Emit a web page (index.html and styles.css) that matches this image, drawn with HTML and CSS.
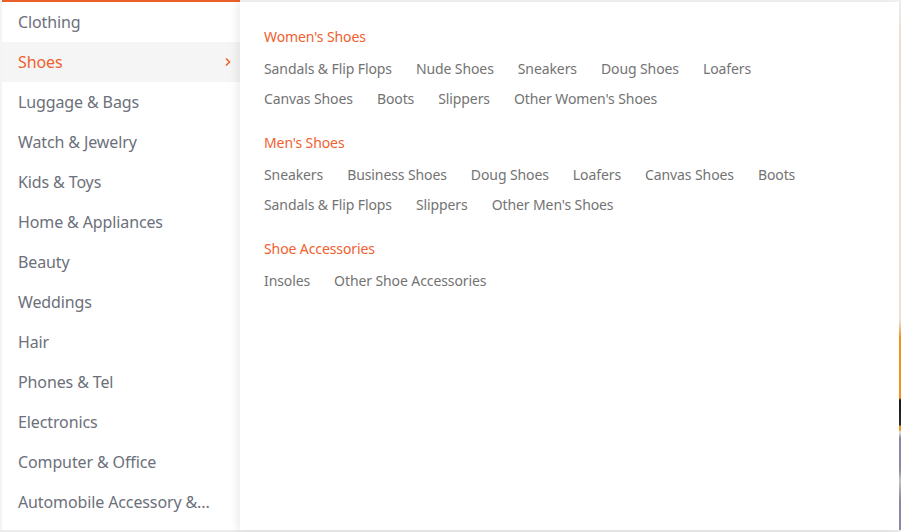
FILE: index.html
```html
<!DOCTYPE html>
<html>
<head>
<meta charset="utf-8">
<link rel="stylesheet" href="styles.css">
</head>
<body>
<div class="page">
  <ul class="cats">
    <li class="cat">Clothing</li>
    <li class="cat active">Shoes<svg class="chev" width="8" height="10" viewBox="0 0 8 10"><path d="M2 1.5 L5.5 5 L2 8.5" fill="none" stroke="#f0602e" stroke-width="1.6"/></svg></li>
    <li class="cat">Luggage &amp; Bags</li>
    <li class="cat">Watch &amp; Jewelry</li>
    <li class="cat">Kids &amp; Toys</li>
    <li class="cat">Home &amp; Appliances</li>
    <li class="cat">Beauty</li>
    <li class="cat">Weddings</li>
    <li class="cat">Hair</li>
    <li class="cat">Phones &amp; Tel</li>
    <li class="cat">Electronics</li>
    <li class="cat">Computer &amp; Office</li>
    <li class="cat">Automobile Accessory &amp;...</li>
  </ul>
  <div class="panel">
    <section class="group">
      <h3 class="title">Women's Shoes</h3>
      <div class="links">
        <a>Sandals &amp; Flip Flops</a><a>Nude Shoes</a><a>Sneakers</a><a>Doug Shoes</a><a>Loafers</a>
        <a>Canvas Shoes</a><a>Boots</a><a>Slippers</a><a>Other Women's Shoes</a>
      </div>
    </section>
    <section class="group">
      <h3 class="title">Men's Shoes</h3>
      <div class="links">
        <a>Sneakers</a><a>Business Shoes</a><a>Doug Shoes</a><a>Loafers</a><a>Canvas Shoes</a><a>Boots</a>
        <a>Sandals &amp; Flip Flops</a><a>Slippers</a><a>Other Men's Shoes</a>
      </div>
    </section>
    <section class="group">
      <h3 class="title">Shoe Accessories</h3>
      <div class="links">
        <a>Insoles</a><a>Other Shoe Accessories</a>
      </div>
    </section>
  </div>
  <div class="edge"></div>
</div>
</body>
</html>
```
FILE: styles.css
```css
* { box-sizing: border-box; }
html, body { margin: 0; padding: 0; }
body {
  width: 901px;
  height: 532px;
  background: #ececec;
  font-family: "Noto Sans", "Open Sans", sans-serif;
  overflow: hidden;
}
.page {
  display: flex;
  height: 530px;
  padding-left: 2px;
  background: #f4f4f4;
}
.cats {
  list-style: none;
  margin: 0;
  padding: 0;
  width: 238px;
  background: #fff;
  border-top: 2px solid #ea5f29;
}
.cat {
  display: flex;
  align-items: center;
  justify-content: space-between;
  height: 40px;
  padding: 0 8px 0 16px;
  font-size: 16px;
  letter-spacing: -0.12px;
  color: #6c707a;
  white-space: nowrap;
}
.cat.active {
  background: #f5f5f5;
  color: #f0602e;
}
.panel {
  position: relative;
  margin-top: 2px;
  width: 659px;
  height: 528px;
  background: #fff;
  padding: 25px 24px 0 24px;
  box-shadow: -3px 0 8px rgba(0,0,0,0.08);
}
.group + .group { margin-top: 19px; }
.title {
  margin: 0 0 7px;
  font-size: 14px;
  font-weight: normal;
  line-height: 20px;
  letter-spacing: -0.1px;
  color: #f0602e;
}
.links {
  display: flex;
  flex-wrap: wrap;
  width: 580px;
}
.links a {
  margin-right: 24px;
  font-size: 14px;
  line-height: 30px;
  letter-spacing: -0.1px;
  color: #737373;
  white-space: nowrap;
}
.edge {
  width: 2px;
  height: 530px;
  background: linear-gradient(to bottom, #f0f0f0 0, #efe0d4 40px, #efe4dc 320px, #f7931e 338px, #f7931e 398px, #1a1a1a 400px, #2a2a2a 425px, #f7931e 426px, #f7931e 430px, #e8e8e8 432px, #8f8aa8 438px, #8f8aa8 470px, #c8c4c0 480px, #8f8aa8 500px, #8f8aa8 530px);
}
```
